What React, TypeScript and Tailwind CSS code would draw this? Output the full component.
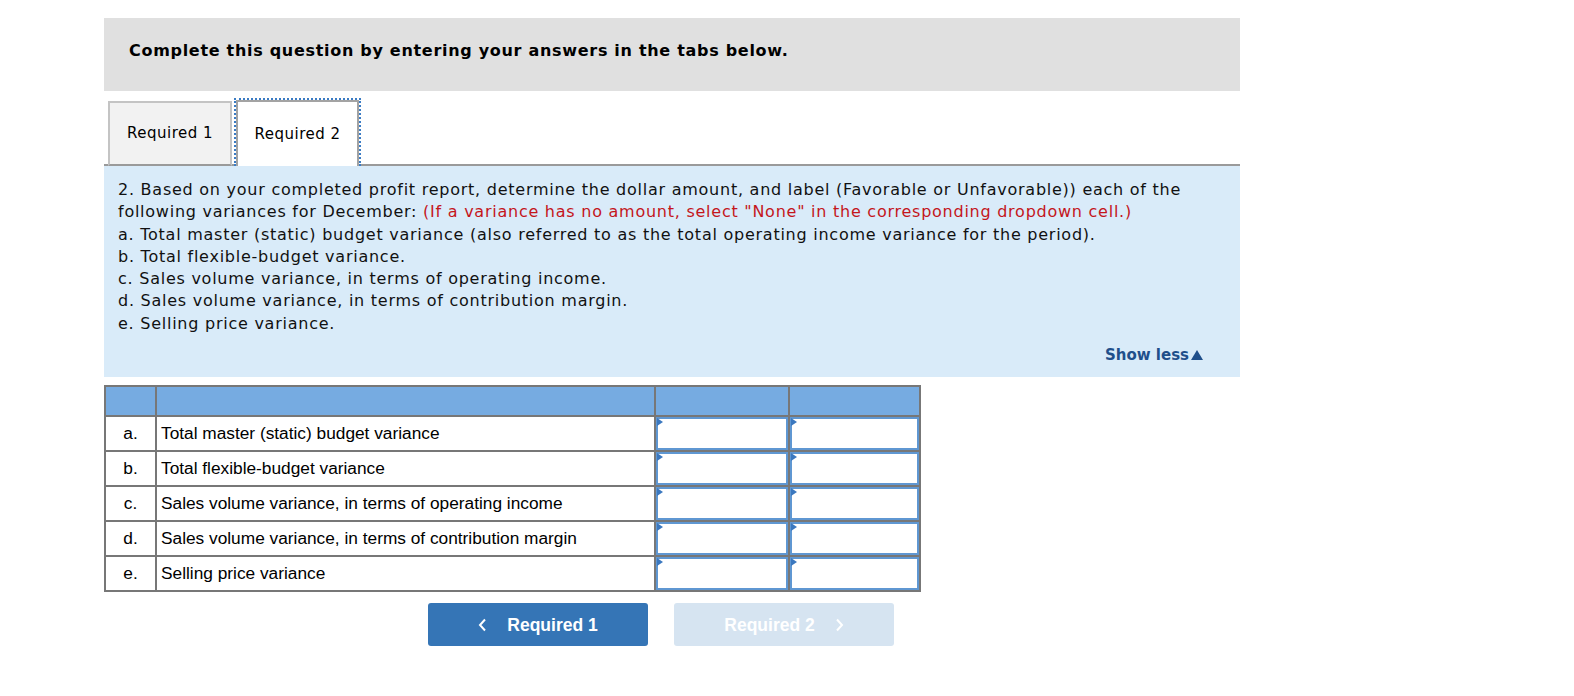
import React from 'react';

const rows = [
    { key: 'a.', label: 'Total master (static) budget variance' },
    { key: 'b.', label: 'Total flexible-budget variance' },
    { key: 'c.', label: 'Sales volume variance, in terms of operating income' },
    { key: 'd.', label: 'Sales volume variance, in terms of contribution margin' },
    { key: 'e.', label: 'Selling price variance' },
];

const verdana = "font-['Verdana','DejaVu_Sans',sans-serif]";

function InputCell() {
    return (
        <div className="relative h-full border-2 border-[#5f97d2] bg-white">
            <span className="absolute left-[-1px] top-[-1px] h-0 w-0 border-y-[4px] border-l-[6px] border-y-transparent border-l-[#3b78bf]" />
        </div>
    );
}

export default function App() {
    return (
        <div className="min-h-[696px] bg-white">
            <div className="ml-[104px] w-[1136px] pt-[18px]">
                {/* header */}
                <div className={`h-[73px] bg-[#e0e0e0] pl-[25px] pt-[23px] text-[16px] font-bold leading-[20px] tracking-[0.7px] text-black ${verdana}`}>
                    Complete this question by entering your answers in the tabs below.
                </div>

                {/* tabs */}
                <div className="mt-[7px] flex items-end border-b-2 border-[#9a9a9a] pl-[4px]">
                    <div className={`-mb-[2px] flex h-[65px] w-[124px] items-center justify-center border-2 border-[#c4c4c4] border-b-[#9a9a9a] bg-[#f2f2f2] text-[15px] tracking-[0.5px] text-black ${verdana}`}>
                        Required 1
                    </div>
                    <div className="-mb-[2px] ml-[2px] border-2 border-b-0 border-dotted border-[#3b7cc4]">
                        <div className={`flex h-[66px] w-[123px] items-center justify-center border-2 border-b-0 border-[#a3a3a3] bg-white text-[15px] tracking-[0.5px] text-black ${verdana}`}>
                            Required 2
                        </div>
                    </div>
                </div>

                {/* instructions */}
                <div className={`bg-[#d9ebf9] pb-[11px] pl-[14px] pr-[37px] pt-[13px] text-[16px] leading-[22.3px] tracking-[0.75px] text-[#111] ${verdana}`}>
                    <div>2. Based on your completed profit report, determine the dollar amount, and label (Favorable or Unfavorable)) each of the</div>
                    <div>
                        following variances for December:{' '}
                        <span className="text-[#c4161c]">(If a variance has no amount, select "None" in the corresponding dropdown cell.)</span>
                    </div>
                    <div>a. Total master (static) budget variance (also referred to as the total operating income variance for the period).</div>
                    <div>b. Total flexible-budget variance.</div>
                    <div>c. Sales volume variance, in terms of operating income.</div>
                    <div>d. Sales volume variance, in terms of contribution margin.</div>
                    <div>e. Selling price variance.</div>
                    <div className="mt-[9px] flex justify-end">
                        <span className="flex items-center text-[15px] font-bold tracking-normal text-[#1f4f8b]">
                            Show less
                            <svg width="12" height="10" viewBox="0 0 12 10" className="ml-[2px]">
                                <polygon points="6,0 12,10 0,10" fill="#1f4f8b" />
                            </svg>
                        </span>
                    </div>
                </div>

                {/* table */}
                <div className="mt-[8px] w-[817px] border-2 border-[#777] font-['Liberation_Sans',Arial,sans-serif] text-[17.3px] text-black">
                    <div className="grid h-[28px] grid-cols-[49px_497px_132px_129px] gap-x-[2px] bg-[#777]">
                        <div className="bg-[#76abe1]" />
                        <div className="bg-[#76abe1]" />
                        <div className="bg-[#76abe1]" />
                        <div className="bg-[#76abe1]" />
                    </div>
                    {rows.map((r) => (
                        <div
                            key={r.key}
                            className="grid h-[35px] grid-cols-[49px_497px_132px_129px] gap-x-[2px] border-t-2 border-[#777] bg-[#777]"
                        >
                            <div className="flex items-center justify-center bg-white">{r.key}</div>
                            <div className="flex items-center bg-white pl-[4px]">{r.label}</div>
                            <InputCell />
                            <InputCell />
                        </div>
                    ))}
                </div>

                {/* navigation */}
                <div className="ml-[324px] mt-[11px] flex gap-[26px] font-['Liberation_Sans',Arial,sans-serif] text-[17.5px] font-bold text-white">
                    <button className="flex h-[43px] w-[220px] items-center justify-center rounded-[3px] bg-[#3575b6]">
                        <svg width="9" height="14" viewBox="0 0 9 14" className="mr-[20px]">
                            <polyline points="7,1.5 2,7 7,12.5" fill="none" stroke="white" strokeWidth="2" />
                        </svg>
                        Required 1
                    </button>
                    <button className="flex h-[43px] w-[220px] items-center justify-center rounded-[3px] bg-[#d6e4f1]">
                        Required 2
                        <svg width="9" height="14" viewBox="0 0 9 14" className="ml-[20px]">
                            <polyline points="2,1.5 7,7 2,12.5" fill="none" stroke="white" strokeWidth="2" />
                        </svg>
                    </button>
                </div>
            </div>
        </div>
    );
}
